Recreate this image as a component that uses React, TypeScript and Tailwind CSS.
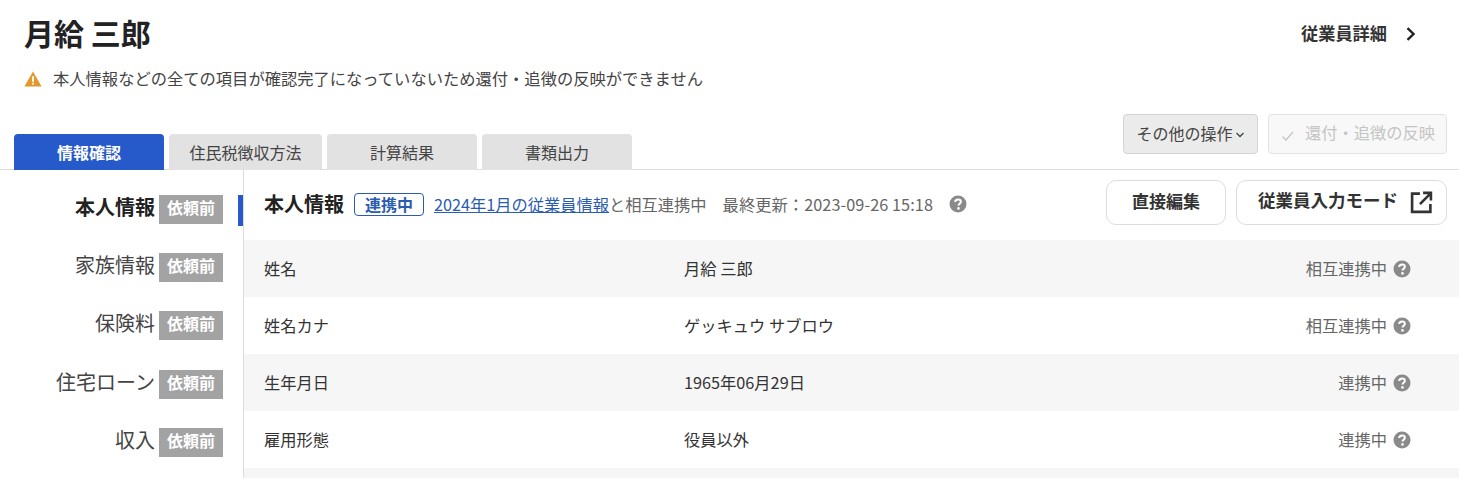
import React from "react";

const font = { fontFamily: '"Noto Sans CJK JP", "Noto Sans", sans-serif' };

function Help({ size = 18 }: { size?: number }) {
  return (
    <svg width={size} height={size} viewBox="0 0 18 18" className="shrink-0">
      <circle cx="9" cy="9" r="8.5" fill="#8a8a8a" />
      <path d="M6.2 7.1c0-1.7 1.3-2.7 2.9-2.7s2.8 1 2.8 2.4c0 1.1-.7 1.6-1.4 2.1-.6.4-.9.7-.9 1.4v.3" fill="none" stroke="#fff" strokeWidth="2" />
      <circle cx="9.5" cy="13.4" r="1.3" fill="#fff" />
    </svg>
  );
}

const side = [
  ["本人情報", true],
  ["家族情報", false],
  ["保険料", false],
  ["住宅ローン", false],
  ["収入", false],
] as const;

const rows = [
  ["姓名", "月給 三郎", "相互連携中", true],
  ["姓名カナ", "ゲッキュウ サブロウ", "相互連携中", false],
  ["生年月日", "1965年06月29日", "連携中", true],
  ["雇用形態", "役員以外", "連携中", false],
] as const;

export default function App() {
  return (
    <div className="w-[1459px] h-[478px] overflow-hidden bg-white text-[#333]" style={font}>
      <div className="flex justify-between pl-6 pr-[42px] h-[68px]">
        <h1 className="text-[30px] leading-[38px] mt-[13px] font-bold text-[#222]">月給 三郎</h1>
        <a className="flex items-center h-[30px] mt-[19px] text-[17.2px] font-bold text-[#333]">
          <span className="-mt-[2px]">従業員詳細</span>
          <svg width="12" height="14" viewBox="0 0 12 14" className="ml-[18px]">
            <path d="M2.5 1.2 8.5 7 2.5 12.8" fill="none" stroke="#222" strokeWidth="2.4" />
          </svg>
        </a>
      </div>
      <div className="flex items-center pl-6 h-[22px] text-[16.3px] text-[#444]">
        <svg width="18" height="16" viewBox="0 0 18 16" className="mr-[11px]">
          <path d="M9 .5 17.6 15.5H.4Z" fill="#e3982e" />
          <rect x="8.1" y="5.2" width="1.8" height="5.6" fill="#fff" />
          <rect x="8.1" y="11.8" width="1.8" height="1.8" fill="#fff" />
        </svg>
        <span className="-mt-[2px]">本人情報などの全ての項目が確認完了になっていないため還付・追徴の反映ができません</span>
      </div>
      <div className="flex items-end justify-between h-[80px] pl-[14px] pr-3 border-b border-[#ddd]">
        <div className="flex gap-[5px] -mb-px">
          <div className="w-[150px] h-9 flex items-center justify-center rounded-t bg-[#2659c9] text-white text-[16px] font-bold">情報確認</div>
          <div className="w-[153px] h-9 flex items-center justify-center rounded-t bg-[#e2e2e2] text-[16px] text-[#444]">住民税徴収方法</div>
          <div className="w-[150px] h-9 flex items-center justify-center rounded-t bg-[#e2e2e2] text-[16px] text-[#444]">計算結果</div>
          <div className="w-[150px] h-9 flex items-center justify-center rounded-t bg-[#e2e2e2] text-[16px] text-[#444]">書類出力</div>
        </div>
        <div className="flex gap-[10px] mb-[15px]">
          <div className="w-[135px] h-10 flex items-center justify-center rounded border border-[#d4d4d4] bg-[#ebebeb] text-[16px] text-[#444]">
            <span className="-mt-[3px]">その他の操作</span>
            <svg width="10" height="8" viewBox="0 0 10 8" className="ml-[2px] mt-[2px]">
              <path d="M1.5 2 5 5.5 8.5 2" fill="none" stroke="#444" strokeWidth="1.3" />
            </svg>
          </div>
          <div className="w-[179px] h-10 flex items-center rounded border border-[#e2e2e2] bg-[#f8f8f8] pl-3 text-[16.25px] text-[#c4c4c4]">
            <svg width="14" height="12" viewBox="0 0 14 12" className="mr-[10px] mt-1">
              <path d="M1.5 6.5 5 10l7-8" fill="none" stroke="#c4c4c4" strokeWidth="1.2" />
            </svg>
            <span className="-mt-[3px]">還付・追徴の反映</span>
          </div>
        </div>
      </div>
      <div className="flex h-[308px]">
        <nav className="w-[244px] shrink-0 border-r border-[#ddd] pt-[25px] flex flex-col gap-[29.2px]">
          {side.map(([label, active]) => (
            <div key={label} className="flex items-center justify-end h-[29px] relative pr-5">
              <span className={`text-[20px] mr-[4px] -mt-[5px] ${active ? "font-bold text-[#222]" : "text-[#444]"}`}>{label}</span>
              <span className="w-16 h-[29px] flex items-center justify-center bg-[#a3a3a3] text-white text-[16px] font-bold pb-[5px]">依頼前</span>
              {active && <span className="absolute right-0 top-0 w-[5px] h-[31px] bg-[#2659c9]" />}
            </div>
          ))}
        </nav>
        <main className="flex-1 min-w-0">
          <div className="h-[70px] flex items-start justify-between pl-5 pr-3">
            <div className="flex items-center h-[70px] -mt-[1px]">
              <span className="text-[20px] font-bold text-[#222]">本人情報</span>
              <span className="ml-[10px] w-[70px] h-[23px] flex items-center justify-center rounded border border-[#2a5cb0] text-[#2a5cb0] text-[16px] font-bold">連携中</span>
              <a className="ml-[10px] text-[16.25px] text-[#2a5cb0] underline">2024年1月の従業員情報</a>
              <span className="text-[16.25px] text-[#666]">と相互連携中</span>
              <span className="ml-4 text-[16.25px] text-[#666] tracking-[0.07px]">最終更新：2023-09-26 15:18</span>
              <span className="ml-4"><Help /></span>
            </div>
            <div className="flex gap-[10px] mt-[10px]">
              <div className="w-[120px] h-[45px] flex items-center justify-center rounded-[10px] border border-[#ddd] text-[17px] font-bold text-[#333] pb-1">直接編集</div>
              <div className="w-[211px] h-[45px] flex items-center rounded-[10px] border border-[#ddd] text-[17.5px] font-bold text-[#333] pl-[21px]">
                <span className="-mt-1">従業員入力モード</span>
                <svg width="23" height="23" viewBox="0 0 22 22" className="ml-3">
                  <path d="M9.5 2.5H2v17.5h17.5v-7.5M12.5 1.8H20V9.2M20 2 9.5 12.5" fill="none" stroke="#333" strokeWidth="2.5" />
                </svg>
              </div>
            </div>
          </div>
          {rows.map(([a, b, c, gray]) => (
            <div key={a} className={`h-[57px] flex items-center pl-5 pr-[48px] text-[16.25px] ${gray ? "bg-[#f6f6f6]" : "bg-white"}`}>
              <span className="w-[420px] text-[#333]">{a}</span>
              <span className="flex-1 text-[#333]">{b}</span>
              <span className="text-[#666] mr-[6px]">{c}</span>
              <Help />
            </div>
          ))}
          <div className="h-[10px] bg-[#f6f6f6]" />
        </main>
      </div>
    </div>
  );
}
